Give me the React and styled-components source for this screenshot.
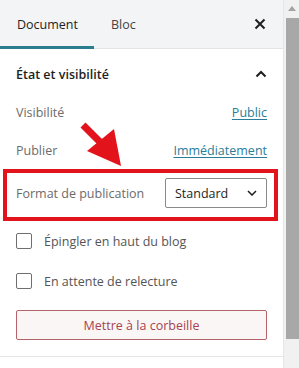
import React from "react";
import styled, { createGlobalStyle } from "styled-components";

const Global = createGlobalStyle`
  html, body { margin: 0; padding: 0; background: #fff; }
  body { font-family: "Open Sans", "Noto Sans", sans-serif; font-size: 12px; color: #1e1e1e; }
  * { box-sizing: border-box; }
`;

const Frame = styled.div`
  position: relative;
  display: flex;
  width: 299px;
  height: 368px;
  overflow: hidden;
`;

const Panel = styled.div`
  width: 284px;
  height: 100%;
  border-right: 1px solid #e6e6e6;
  display: flex;
  flex-direction: column;
`;

const Header = styled.div`
  height: 49px;
  flex: none;
  display: flex;
  align-items: stretch;
  background: #f3f4f5;
  border-bottom: 1px solid #e2e4e7;
  padding-right: 16px;
`;

const Tab = styled.div`
  display: flex;
  align-items: center;
  padding: 0 16px 0 17px;
  font-size: 12.5px;
  font-weight: ${(p) => (p.$active ? 500 : 400)};
  color: ${(p) => (p.$active ? "#1e1e1e" : "#444")};
  box-shadow: ${(p) => (p.$active ? "inset 0 -3px 0 #2a7d8f" : "none")};
  margin-bottom: -1px;
`;

const Spacer = styled.div`
  flex: 1;
`;

const IconBtn = styled.div`
  display: flex;
  align-items: center;
  justify-content: center;
  width: 24px;
  margin-right: -5px;
`;

const Body = styled.div`
  padding: 0 16px 16px 16px;
  display: flex;
  flex-direction: column;
  border-bottom: 1px solid #e6e6e6;
`;

const SectionTitle = styled.div`
  height: 50px;
  display: flex;
  align-items: center;
  justify-content: space-between;
  font-size: 12.5px;
  font-weight: 600;
  color: #1e1e1e;
`;

const Row = styled.div`
  position: relative;
  display: flex;
  align-items: center;
  justify-content: space-between;
  height: ${(p) => p.$h || 26}px;
  margin-top: ${(p) => p.$mt || 0}px;
`;

const Label = styled.span`
  color: #6b6b6b;
  font-size: 12.5px;
`;

const Link = styled.a`
  color: #2a7d9a;
  text-decoration: underline;
  text-underline-offset: 2px;
  font-size: 12.5px;
`;

const Highlight = styled.div`
  position: absolute;
  left: -13px;
  right: -11px;
  top: -9px;
  bottom: -13px;
  border: 4px solid #e3131b;
  pointer-events: none;
`;

const Select = styled.div`
  width: 102px;
  height: 30px;
  border: 1px solid #8a8a8a;
  border-radius: 2px;
  display: flex;
  align-items: center;
  justify-content: space-between;
  padding: 0 9px 0 9px;
  font-size: 12.5px;
  color: #1e1e1e;
`;

const CheckRow = styled.label`
  display: flex;
  align-items: center;
  gap: 12px;
  height: 24px;
  margin-top: ${(p) => p.$mt}px;
  color: #555;
  font-size: 12.5px;
`;

const Box = styled.span`
  width: 16px;
  height: 16px;
  border: 1.5px solid #6f6f6f;
  border-radius: 2px;
  flex: none;
`;

const DangerButton = styled.button`
  margin-top: 17px;
  height: 30px;
  width: 100%;
  border: 1px solid #b5636b;
  border-radius: 2px;
  background: #fbf6f6;
  color: #a4434f;
  font-family: inherit;
  font-size: 12.5px;
`;

const ScrollBar = styled.div`
  width: 15px;
  margin-left: auto;
  background: #f1f1f1;
  display: flex;
  flex-direction: column;
  align-items: stretch;
`;

const ScrollArrow = styled.div`
  height: 17px;
  display: flex;
  align-items: center;
  justify-content: center;
`;

const Thumb = styled.div`
  height: 321px;
  margin: 1px 0 0 2px;
  background: #a8a8a8;
`;

const Arrow = styled.svg`
  position: absolute;
  left: 0;
  top: 0;
  pointer-events: none;
`;

export default function App() {
  return (
    <>
      <Global />
      <Frame>
        <Panel>
          <Header>
            <Tab $active>Document</Tab>
            <Tab>Bloc</Tab>
            <Spacer />
            <IconBtn>
              <svg width="12" height="12" viewBox="0 0 12 12">
                <path d="M1.5 1.5 L10.5 10.5 M10.5 1.5 L1.5 10.5" stroke="#1e1e1e" strokeWidth="2" />
              </svg>
            </IconBtn>
          </Header>
          <Body>
            <SectionTitle>
              État et visibilité
              <svg width="12" height="8" viewBox="0 0 12 8">
                <path d="M1.5 6.5 L6 2 L10.5 6.5" fill="none" stroke="#1e1e1e" strokeWidth="2" />
              </svg>
            </SectionTitle>
            <Row>
              <Label>Visibilité</Label>
              <Link>Public</Link>
            </Row>
            <Row $mt={12}>
              <Label>Publier</Label>
              <Link>Immédiatement</Link>
            </Row>
            <Row $h={30} $mt={15}>
              <Label>Format de publication</Label>
              <Select>
                Standard
                <svg width="10" height="6" viewBox="0 0 10 6">
                  <path d="M1 1 L5 5 L9 1" fill="none" stroke="#1e1e1e" strokeWidth="1.5" />
                </svg>
              </Select>
              <Highlight />
            </Row>
            <CheckRow $mt={21}>
              <Box />
              Épingler en haut du blog
            </CheckRow>
            <CheckRow $mt={16}>
              <Box />
              En attente de relecture
            </CheckRow>
            <DangerButton>Mettre à la corbeille</DangerButton>
          </Body>
        </Panel>
        <ScrollBar>
          <ScrollArrow>
            <svg width="8" height="5" viewBox="0 0 8 5">
              <path d="M0 5 L4 0 L8 5 Z" fill="#a3a3a3" />
            </svg>
          </ScrollArrow>
          <Thumb />
        </ScrollBar>
        <Arrow width="299" height="368" viewBox="0 0 299 368">
          <path d="M83 125 L101 143" stroke="#e3131b" strokeWidth="7" strokeLinecap="butt" />
          <path d="M87 151 L114 129 L121 166 Z" fill="#e3131b" />
        </Arrow>
      </Frame>
    </>
  );
}
